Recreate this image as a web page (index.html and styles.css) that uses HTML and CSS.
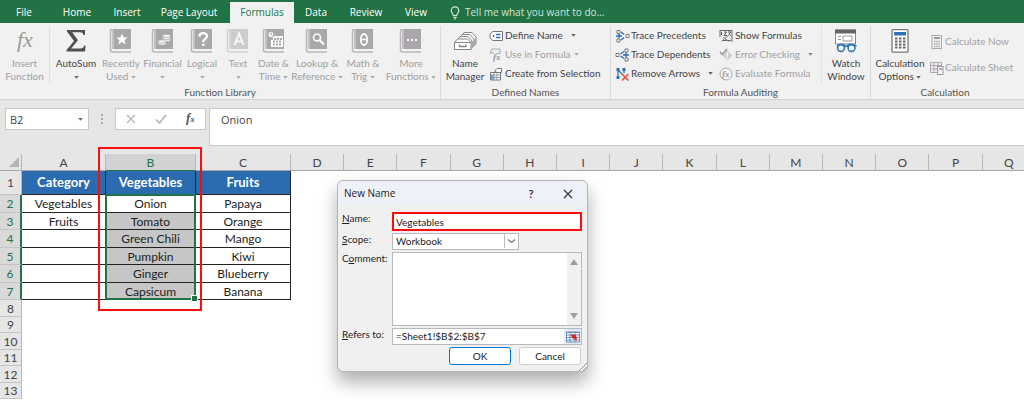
FILE: index.html
```html
<!DOCTYPE html>
<html lang="en">
<head>
<meta charset="utf-8">
<title>Workbook</title>
<link rel="stylesheet" href="styles.css">
</head>
<body>
<svg class="defs" aria-hidden="true">
  <symbol id="book" viewBox="0 0 24 24">
    <path d="M3 0H22V20H3z" fill="#a9a7aa"/>
    <path d="M4 0V20" stroke="#dcdadd" stroke-width="1"/>
    <path d="M3 .5C1.500 .5 1.500 1 1.500 2V21C1.500 23 3 23 4 23H22" fill="none" stroke="#b9b5ba" stroke-width="1.500"/>
    <path d="M3 21H22" stroke="#f4f0f4" stroke-width="1.500"/>
  </symbol>
  <symbol id="caret" viewBox="0 0 6 4"><path d="M0 0H6L3 3.500z" fill="currentColor"/></symbol>
</svg>

<nav class="tabs">
  <button class="tab file">File</button>
  <button class="tab home">Home</button>
  <button class="tab insert">Insert</button>
  <button class="tab layout">Page Layout</button>
  <button class="tab formulas active">Formulas</button>
  <button class="tab data">Data</button>
  <button class="tab review">Review</button>
  <button class="tab view">View</button>
  <button class="tell">
    <svg width="10" height="14" viewBox="0 0 10 14" fill="none" stroke="#d6e8dd" stroke-width="1.200"><path d="M3.300 9.500C3.300 7.800 1.200 7 1.200 4.600a3.800 3.800 0 0 1 7.600 0C8.800 7 6.700 7.800 6.700 9.500zM3.300 11.300H6.700M4 13H6"/></svg>
    <span>Tell me what you want to do...</span>
  </button>
</nav>

<section class="ribbon">
  <div class="group">
    <div class="library">
      <button class="big off"><svg width="28" height="24" viewBox="0 0 28 24"><text x="6" y="18" class="fx-big">fx</text></svg><span>Insert<br>Function</span></button>
      <button class="big split"><svg width="24" height="24" viewBox="0 0 24 24"><path d="M3 1H21V6H19.500C19 3.800 18 3.200 16 3.200H8.200L14 11.200L7.200 19.500H16.500C18.800 19.500 19.600 18.500 20.300 16.500H21.600L21 22.500H2.500V21L10 12L3 2.500z" fill="#505050"/></svg><span>AutoSum<br><svg class="caret"><use href="#caret"/></svg></span></button>
      <button class="big off"><svg width="24" height="24" viewBox="0 0 24 24"><use href="#book"/><path d="M13 4.500l1.700 4h4l-3.200 2.700 1.200 4.300-3.700-2.500-3.700 2.500 1.200-4.300L7.300 8.500h4z" fill="#fff"/></svg><span>Recently<br>Used <svg class="caret"><use href="#caret"/></svg></span></button>
      <button class="big off"><svg width="24" height="24" viewBox="0 0 24 24"><use href="#book"/><g fill="#f4f2f4" stroke="#aaa8ab" stroke-width=".7"><ellipse cx="15.500" cy="11" rx="4" ry="1.700"/><ellipse cx="15.500" cy="9" rx="4" ry="1.700"/><ellipse cx="15.500" cy="7" rx="4" ry="1.700"/><ellipse cx="11" cy="14.500" rx="4" ry="1.700"/><ellipse cx="11" cy="12.500" rx="4" ry="1.700"/></g></svg><span>Financial<br><svg class="caret"><use href="#caret"/></svg></span></button>
      <button class="big off"><svg width="24" height="24" viewBox="0 0 24 24"><use href="#book"/><path d="M9.500 7.500C9.500 3 17 3 17 7.200C17 10 13.200 9.800 13.200 13" fill="none" stroke="#fff" stroke-width="2.300"/><path d="M12 14.500h2.500v2.500H12z" fill="#fff"/></svg><span>Logical<br><svg class="caret"><use href="#caret"/></svg></span></button>
      <button class="big off"><svg class="pale" width="24" height="24" viewBox="0 0 24 24"><use href="#book"/><path d="M8.500 16L13 4.500L17.500 16M10 12.500H16" fill="none" stroke="#fff" stroke-width="2"/></svg><span>Text<br><svg class="caret"><use href="#caret"/></svg></span></button>
      <button class="big off"><svg width="24" height="24" viewBox="0 0 24 24"><use href="#book"/><path d="M9 7H21V18H9z" fill="#fff"/><path d="M9 10H21M11 12.500H20M11 15.500H20" stroke="#aaa8ab" stroke-width="1.800" stroke-dasharray="2 1"/><circle cx="9" cy="5.500" r="3" fill="#fff" stroke="#aaa8ab"/><path d="M9 3.700V5.700H10.500" fill="none" stroke="#999"/></svg><span>Date &amp;<br>Time <svg class="caret"><use href="#caret"/></svg></span></button>
      <button class="big off"><svg width="24" height="24" viewBox="0 0 24 24"><use href="#book"/><circle cx="12" cy="8.500" r="3.500" fill="none" stroke="#fff" stroke-width="1.600"/><path d="M14.500 11L19 15.500" stroke="#fff" stroke-width="2.200"/></svg><span>Lookup &amp;<br>Reference <svg class="caret"><use href="#caret"/></svg></span></button>
      <button class="big off"><svg width="24" height="24" viewBox="0 0 24 24"><use href="#book"/><ellipse cx="13" cy="10.500" rx="3.200" ry="5.500" fill="none" stroke="#fff" stroke-width="1.800"/><path d="M10 10.500H16" stroke="#fff" stroke-width="1.500"/></svg><span>Math &amp;<br>Trig <svg class="caret"><use href="#caret"/></svg></span></button>
      <button class="big off"><svg width="24" height="24" viewBox="0 0 24 24"><use href="#book"/><path d="M8 11H10M12 11H14M16 11H18" stroke="#fff" stroke-width="2"/></svg><span>More<br>Functions <svg class="caret"><use href="#caret"/></svg></span></button>
    </div>
    <h2>Function Library</h2>
  </div>

  <div class="group names">
    <div class="row">
      <button class="big manager"><svg width="24" height="24" viewBox="0 0 24 24" fill="#fff" stroke="#858585" stroke-width="1"><path d="M9 8L11 3.500H19L23 8V15L19 19z"/><path d="M7 9.500L9 5.500H17L21 10V17H7z"/><path d="M5 11L7 7.500H15L19 12V19H5z"/><path d="M1.500 13.500L4.500 10H14.500L18 13.500V20.500H1.500z"/><path d="M1.500 13.500H18" fill="none"/><path d="M18 20.500L23 15V9L18 13.500z" fill="#aaa" stroke="none"/><path d="M6.500 15.500V17.500H13V15.500" fill="none" stroke-width="1.300"/></svg><span>Name<br>Manager</span></button>
      <div class="stack">
        <button class="small"><svg width="16" height="14" viewBox="0 0 16 14" fill="none"><path d="M4 2.500H13.500V11.500H4L1 9V5z" fill="#fff" stroke="#777"/><circle cx="4.500" cy="7" r="1" fill="#666"/><path d="M7 5.500H11.500M7 8.500H11.500" stroke="#3a76b8" stroke-width="1.300"/></svg><span>Define Name</span><svg class="caret far"><use href="#caret"/></svg></button>
        <button class="small off"><svg width="16" height="14" viewBox="0 0 16 14"><path d="M1 5L3 1H11V5.500H7.500M1 5H5" fill="#eee" stroke="#aaa"/><text x="4" y="12" class="fx-small">fx</text></svg><span>Use in Formula</span><svg class="caret"><use href="#caret"/></svg></button>
        <button class="small"><svg width="16" height="14" viewBox="0 0 16 14" fill="none"><path d="M1.500 5.500H11.500V13H1.500z" fill="#fff" stroke="#777"/><path d="M2 8H11M2 10.500H11M5 6V13M8 6V13" stroke="#8a9eb2"/><path d="M5.500 4L8 1.500H12.500V5.500H8z" fill="#fff" stroke="#777"/><path d="M2 8h3v5H2z" fill="#73a4d2"/></svg><span>Create from Selection</span></button>
      </div>
    </div>
    <h2>Defined Names</h2>
  </div>

  <div class="group audit">
    <div class="row">
      <div class="stack trace">
        <button class="small"><svg width="16" height="14" viewBox="0 0 16 14" fill="none"><path d="M2 1.500h3v3H2zM2 10h3v3H2zM11 5.500h3v3h-3z" fill="#fff" stroke="#777"/><path d="M1 7H7M4 5V9M6 3L9 5.500M6 11L9 8.500" stroke="#2d72b8" stroke-width="1.500"/></svg><span>Trace Precedents</span></button>
        <button class="small"><svg width="16" height="14" viewBox="0 0 16 14" fill="none"><path d="M1 5.500h3v3H1zM10 1h3v3h-3zM10 10h3v3h-3z" fill="#fff" stroke="#777"/><path d="M5.500 6L9 3.500M5.500 8L9 10.500M8 7H14M11 4.500V9.500" stroke="#2d72b8" stroke-width="1.500"/></svg><span>Trace Dependents</span></button>
        <button class="small"><svg width="16" height="14" viewBox="0 0 16 14" fill="none"><path d="M3 2V11M3 3L8 8M9 2V6" stroke="#2d72b8" stroke-width="1.300"/><path d="M1.500 1h3v3h-3zM1.500 9h3v3h-3zM7.500 1h3v3h-3z" fill="#2d72b8"/><path d="M7 7L13.500 13.500M13.500 7L7 13.500" stroke="#e0533a" stroke-width="1.600"/></svg><span>Remove Arrows</span><svg class="caret far"><use href="#caret"/></svg></button>
      </div>
      <div class="stack checks">
        <button class="small"><svg width="16" height="14" viewBox="0 0 16 14" fill="none"><path d="M1 1.500H13V13M1 1V8M3 11.500H12" stroke="#666"/><path d="M2.500 3V6M5 3H7.500L5 6.500H8M9 3H12L10 5L12 6.500" stroke="#555"/><path d="M2.500 12.500L11 5M4 8L10 12.500" stroke="#777"/></svg><span>Show Formulas</span></button>
        <button class="small off"><svg width="16" height="14" viewBox="0 0 16 14"><path d="M1 4L3.500 6.500L8 1" fill="none" stroke="#999" stroke-width="1.700"/><path d="M8.500 2.500L13.500 7.500L8.500 12.500L3.500 7.500z" fill="#d2cdd2"/><path d="M8.500 5V9M8.500 10V11" stroke="#fff" stroke-width="1.300"/></svg><span>Error Checking</span><svg class="caret far dark"><use href="#caret"/></svg></button>
        <button class="small off"><svg width="16" height="14" viewBox="0 0 16 14"><circle cx="7" cy="7" r="6" fill="#f7f5f7" stroke="#aaa"/><text x="3" y="10" class="fx-small">fx</text></svg><span>Evaluate Formula</span></button>
      </div>
      <button class="big watch"><svg width="24" height="24" viewBox="0 0 24 24" fill="none"><path d="M1.500 1H21.500V15H1.500z" fill="#fff" stroke="#888"/><path d="M1 .5H22V4.500H1z" fill="#666"/><path d="M4 7.500H7M4 10.500H7M9 7H18V12H9z" stroke="#999"/><path d="M3 17L5.500 15.500H9.500C10.500 18 13.500 18 14.500 15.500H19L22.500 17" stroke="#2d72b8" stroke-width="1.600"/><circle cx="7" cy="19" r="3.400" fill="#fff" stroke="#2d72b8" stroke-width="1.600"/><circle cx="17.500" cy="19" r="3.400" fill="#fff" stroke="#2d72b8" stroke-width="1.600"/></svg><span>Watch<br>Window</span></button>
    </div>
    <h2>Formula Auditing</h2>
  </div>

  <div class="group calc">
    <div class="row">
      <button class="big options"><svg width="24" height="24" viewBox="0 0 24 24"><rect x="4" y=".7" width="16" height="22.500" rx="1" fill="#fff" stroke="#777" stroke-width="1.300"/><path d="M6 3H18V6.500H6z" fill="#2d72b8"/><path d="M7 9.500H18M7 12.500H18M7 15.500H18M7 18.500H18" stroke="#666" stroke-width="2" stroke-dasharray="2.500 1.500"/></svg><span>Calculation<br>Options <svg class="caret"><use href="#caret"/></svg></span></button>
      <div class="stack two">
        <button class="small off"><svg width="16" height="14" viewBox="0 0 16 14"><rect x="3" y=".5" width="9.500" height="13" fill="#f3f1f3" stroke="#aaa"/><path d="M5 3H11" stroke="#999" stroke-width="2"/><path d="M5 6.500H11M5 9H11M5 11.500H11" stroke="#aaa" stroke-width="1.500" stroke-dasharray="1.500 .7"/></svg><span>Calculate Now</span></button>
        <button class="small off"><svg width="16" height="14" viewBox="0 0 16 14"><path d="M1.500 1.500H12.500V11.500H1.500zM1.500 4.500H12.500M1.500 8H8M5 1.500V11.500M9 1.500V5" fill="none" stroke="#b3a5b3"/><rect x="8.500" y="5.500" width="5.500" height="8" fill="#f3f1f3" stroke="#999"/><path d="M10 8H13" stroke="#999" stroke-width="1.500"/></svg><span>Calculate Sheet</span></button>
      </div>
    </div>
    <h2>Calculation</h2>
  </div>
</section>

<section class="formula-bar">
  <div class="name-box">
    <input type="text" value="B2" aria-label="Name Box">
    <button aria-label="Show names"><svg class="caret"><use href="#caret"/></svg></button>
  </div>
  <svg class="grip" width="4" height="12" viewBox="0 0 4 12"><path d="M1 1h2v2H1zM1 5h2v2H1zM1 9h2v2H1z" fill="#aaa"/></svg>
  <div class="entry-buttons">
    <button aria-label="Cancel entry"><svg width="12" height="12" viewBox="0 0 12 12"><path d="M2 2L10 10M10 2L2 10" stroke="#b5b5b5" stroke-width="1.300"/></svg></button>
    <button aria-label="Enter"><svg width="12" height="12" viewBox="0 0 12 12"><path d="M1 6.500L4.500 10L11 2" fill="none" stroke="#b5b5b5" stroke-width="1.700"/></svg></button>
    <button aria-label="Insert function"><svg width="16" height="16" viewBox="0 0 16 16"><text x="4" y="11" class="fx-bar">f<tspan class="fx-sub">x</tspan></text></svg></button>
  </div>
  <input class="formula" type="text" value="Onion" aria-label="Formula bar">
</section>

<main class="sheet">
  <table class="grid">
    <colgroup><col class="c-head"><col class="c-a"><col class="c-b"><col class="c-c"><col span="14"></colgroup>
    <thead>
      <tr><th class="corner"><svg width="12" height="12" viewBox="0 0 12 12"><path d="M11 1V11H1z" fill="#b4b4b4"/></svg></th><th>A</th><th class="sel">B</th><th>C</th><th>D</th><th>E</th><th>F</th><th>G</th><th>H</th><th>I</th><th>J</th><th>K</th><th>L</th><th>M</th><th>N</th><th>O</th><th>P</th><th>Q</th></tr>
    </thead>
    <tbody class="filled">
      <tr class="title"><th>1</th><td>Category</td><td>Vegetables</td><td>Fruits</td></tr>
      <tr><th>2</th><td>Vegetables</td><td>Onion</td><td>Papaya</td></tr>
      <tr><th>3</th><td>Fruits</td><td class="picked">Tomato</td><td>Orange</td></tr>
      <tr><th>4</th><td></td><td class="picked">Green Chili</td><td>Mango</td></tr>
      <tr><th>5</th><td></td><td class="picked">Pumpkin</td><td>Kiwi</td></tr>
      <tr><th>6</th><td></td><td class="picked">Ginger</td><td>Blueberry</td></tr>
      <tr><th>7</th><td></td><td class="picked">Capsicum</td><td>Banana</td></tr>
    </tbody>
    <tbody class="empty">
      <tr><th>8</th></tr>
      <tr><th>9</th></tr>
      <tr><th>10</th></tr>
      <tr><th>11</th></tr>
      <tr><th>12</th></tr>
      <tr><th>13</th></tr>
    </tbody>
  </table>
  <div class="selection"></div>
  <div class="callout"></div>

  <form class="dialog" role="dialog" aria-labelledby="dialog-title">
    <header>
      <h1 id="dialog-title">New Name</h1>
      <button type="button" class="help" aria-label="Help">?</button>
      <button type="button" class="close" aria-label="Close"><svg width="10" height="10" viewBox="0 0 10 10"><path d="M1 1L9 9M9 1L1 9" stroke="#333" stroke-width="1.200"/></svg></button>
    </header>
    <div class="fields">
      <label for="name"><u>N</u>ame:</label>
      <input id="name" class="field marked" type="text" value="Vegetables">
      <label for="scope"><u>S</u>cope:</label>
      <div class="select">
        <select id="scope"><option>Workbook</option></select>
        <svg width="14" height="14" viewBox="0 0 14 14"><path d="M.5 0V14" stroke="#bbb"/><path d="M4 5.500L7.500 8.500L11 5.500" fill="none" stroke="#777" stroke-width="1.200"/></svg>
      </div>
      <label for="comment">C<u>o</u>mment:</label>
      <div class="comment">
        <textarea id="comment"></textarea>
        <div class="scroll">
          <svg width="8" height="6" viewBox="0 0 8 6"><path d="M4 0L8 6H0z" fill="#a0a0a0"/></svg>
          <svg width="8" height="6" viewBox="0 0 8 6"><path d="M0 0H8L4 6z" fill="#a0a0a0"/></svg>
        </div>
      </div>
      <label for="refers"><u>R</u>efers to:</label>
      <div class="refers">
        <input id="refers" type="text" value="=Sheet1!$B$2:$B$7">
        <button type="button" aria-label="Collapse dialog"><svg width="14" height="12" viewBox="0 0 14 12"><path d="M.5 1H13.500V11H.5z" fill="#fff" stroke="#6d8fc0"/><path d="M1 1.500H13M1 4H13M1 6.500H13M1 9H13M4 1V11M9 1V11" stroke="#6d8fc0"/><path d="M5 3L10 4L11 9.500L6 7z" fill="#dc2222"/></svg></button>
      </div>
    </div>
    <footer>
      <button type="button" class="ok">OK</button>
      <button type="button">Cancel</button>
    </footer>
    <svg class="resize" width="8" height="8" viewBox="0 0 8 8"><path d="M0 8L8 0M4 8L8 4" stroke="#999"/></svg>
  </form>
</main>
</body>
</html>
```
FILE: styles.css
```css
* { box-sizing: border-box; }

body {
  margin: 0;
  background: #fff;
  color: #444;
  font: 10px/13px "Open Sans", "Noto Sans", sans-serif;
  overflow: hidden;
}

button, input, select, textarea {
  margin: 0;
  padding: 0;
  border: 0;
  background: none;
  color: inherit;
  font: inherit;
  outline: 0;
  border-radius: 0;
}

h1, h2 { margin: 0; font: inherit; }
.defs { position: absolute; width: 0; height: 0; }
.caret { width: 5px; height: 3px; color: #666; vertical-align: middle; }
.off .caret { color: #aaa; }
.off .caret.dark { color: #888; }

/* Tabs */
.tabs {
  display: flex;
  height: 23px;
  padding-top: 2px;
  background: #217346;
  color: #fff;
  white-space: nowrap;
}
.tab { flex: none; padding-bottom: 1px; }
.file { width: 48px; }
.home { width: 58px; }
.insert { width: 42px; }
.layout { width: 82px; }
.formulas { width: 64px; }
.data { width: 44px; }
.review { width: 56px; }
.view { width: 44px; }
.tab.active { background: #f1f1f1; color: #217346; }
.tell { display: flex; align-items: center; gap: 5px; margin-left: 12px; color: #cfe3d7; }

/* Ribbon */
.ribbon {
  display: flex;
  height: 77px;
  background: #f1f1f1;
  border-bottom: 1px solid #d2d2d2;
  font-family: Lato, "Open Sans", sans-serif;
  white-space: nowrap;
}
.group {
  flex: none;
  display: flex;
  flex-direction: column;
  justify-content: space-between;
  margin: 3px 0 0;
  border-right: 1px solid #d9d9d9;
}
.group:last-child { border: 0; flex: 1; }
.group h2 { text-align: center; color: #555; }
.row { display: flex; }
.library {
  display: grid;
  grid-template-columns: 50px 52px 38px 45px 34px 38px 33px 54px 38px 58px;
}
.library .big:first-child { border-right: 1px solid #dedede; }
.big {
  display: flex;
  flex-direction: column;
  align-items: center;
  gap: 4px;
  padding-top: 3px;
}
.big > span { text-align: center; }
.off { color: #a0a0a0; }
.pale { opacity: 0.5; }
.manager { width: 48px; }
.watch { width: 49px; border-left: 1px solid #e0e0e0; }
.options { width: 58px; }
.names { width: 170px; }
.audit { width: 260px; }
.stack { display: flex; flex-direction: column; }
.small { display: flex; align-items: center; height: 19px; }
.small > svg:first-child { flex: none; }
.small .caret { flex: none; margin-left: 3px; }
.small .caret.far { margin-left: 8px; }
.trace { width: 108px; padding-left: 4px; }
.checks { flex: 1; }
.two { gap: 7px; padding-top: 6px; }
.calc h2 { width: 148px; }
.fx-big { font: italic 22px "Liberation Serif", serif; fill: #999; }
.fx-small { font: italic bold 9px "Liberation Serif", serif; fill: #999; }
.fx-bar { font: italic bold 13px "Liberation Serif", serif; fill: #555; }
.fx-sub { font-size: 9px; }

/* Formula bar */
.formula-bar {
  display: flex;
  align-items: flex-start;
  height: 54px;
  padding: 8px 0 0 5px;
  background: #e6e6e6;
}
.name-box, .entry-buttons {
  display: flex;
  height: 22px;
  background: #fff;
  border: 1px solid #c8c8c8;
}
.name-box { width: 84px; }
.name-box input { flex: 1; min-width: 0; padding-left: 4px; }
.name-box button { width: 16px; }
.grip { margin: 5px 11px 0; }
.entry-buttons { width: 91px; }
.entry-buttons button { flex: 1; display: flex; align-items: center; justify-content: center; }
.formula {
  flex: 1;
  height: 38px;
  margin-left: 3px;
  padding: 0 0 16px 11px;
  background: #fff;
  border: 1px solid #c8c8c8;
  border-right: 0;
}
.name-box input, .formula { font-size: 11px; }

/* Sheet */
.sheet { position: relative; }
.grid {
  width: calc(100% + 12px);
  table-layout: fixed;
  border-collapse: separate;
  border-spacing: 0;
  color: #222;
  font-family: Lato, sans-serif;
  font-size: 12px;
  line-height: 15px;
}
.c-head { width: 22px; }
.c-a { width: 84px; }
.c-b { width: 90px; }
.c-c { width: 95px; }
.grid th, .grid td { padding: 0; text-align: center; }
.grid th { background: #e6e6e6; color: #444; font-weight: 400; }
.grid thead th {
  height: 17px;
  border-right: 1px solid #b8b8b8;
  border-bottom: 1px solid #a6a6a6;
}
.grid thead .sel { background: #d2d2d2; color: #217346; border-bottom-color: #217346; }
.corner svg { display: block; margin-left: 8px; }
.grid tbody th { border-right: 1px solid #b8b8b8; border-bottom: 1px solid #c4c4c4; }
.filled tr { height: 17px; }
.filled tr:nth-child(even) { height: 18px; }
.filled tr.title { height: 24px; }
.filled td { border-right: 1px solid #222; border-bottom: 1px solid #222; }
.filled tr:not(.title) th { background: #d9d9d9; color: #217346; border-right: 2px solid #217346; }
.filled .title td { background: #2a6caf; color: #fff; font-weight: 700; font-size: 13px; }
.filled .picked { background: #c6c6c6; }
.empty tr { height: 16px; }
.empty tr:nth-child(odd) { height: 17px; }

/* Overlays on the cells */
.selection {
  position: absolute;
  left: 105px;
  top: 40px;
  width: 91px;
  height: 106px;
  border: 2px solid #217346;
}
.selection::after {
  content: "";
  position: absolute;
  right: -3px;
  bottom: -3px;
  width: 5px;
  height: 5px;
  background: #217346;
  outline: 1px solid #fff;
}
.callout {
  position: absolute;
  left: 98px;
  top: -7px;
  width: 104px;
  height: 164px;
  border: 2px solid #fb0d0d;
}

/* New Name dialog */
.dialog {
  position: absolute;
  left: 337px;
  top: 26px;
  width: 251px;
  background: #f0f0f0;
  border: 1px solid #b4b4b4;
  border-radius: 6px;
  box-shadow: 0 10px 18px rgba(0, 0, 0, 0.32);
  color: #222;
  font-family: Lato, "Open Sans", sans-serif;
}
.dialog header {
  display: flex;
  align-items: center;
  height: 25px;
  padding: 0 14px 0 6px;
  background: #eef2f8;
  border-radius: 6px 6px 0 0;
}
.dialog h1 { flex: 1; font-family: "Open Sans", sans-serif; }
.help { width: 10px; margin-right: 27px; font-size: 11px; font-weight: 600; }
.close { display: flex; }
.fields {
  display: grid;
  grid-template-columns: 50px 1fr;
  row-gap: 2px;
  padding: 6px 5px 0 4px;
}
.field, .select, .comment, .refers {
  display: flex;
  height: 17px;
  background: #fff;
  border: 1px solid #b8b8c0;
}
.field.marked { height: 19px; padding-left: 2px; border: 2px solid #fb0d0d; }
.select { position: relative; width: 127px; }
.select select { appearance: none; width: 100%; padding-left: 3px; }
.select svg { position: absolute; right: 0; top: 0; pointer-events: none; }
.comment { height: 74px; }
.comment textarea { flex: 1; min-width: 0; resize: none; }
.scroll {
  display: flex;
  flex-direction: column;
  align-items: center;
  justify-content: space-between;
  width: 14px;
  padding: 6px 0;
  background: #f0f0f0;
}
.refers input { flex: 1; min-width: 0; padding-left: 3px; }
.refers button { display: flex; align-items: center; justify-content: center; width: 17px; background: #e4e9f2; }
.dialog footer { display: flex; justify-content: flex-end; gap: 8px; padding: 2px 6px 6px; }
.dialog footer button {
  width: 62px;
  height: 18px;
  background: #fff;
  border: 1px solid #ccc;
  border-radius: 3px;
}
.dialog footer .ok { border-color: #0078d4; }
.resize { position: absolute; right: 0; bottom: 0; }
```
